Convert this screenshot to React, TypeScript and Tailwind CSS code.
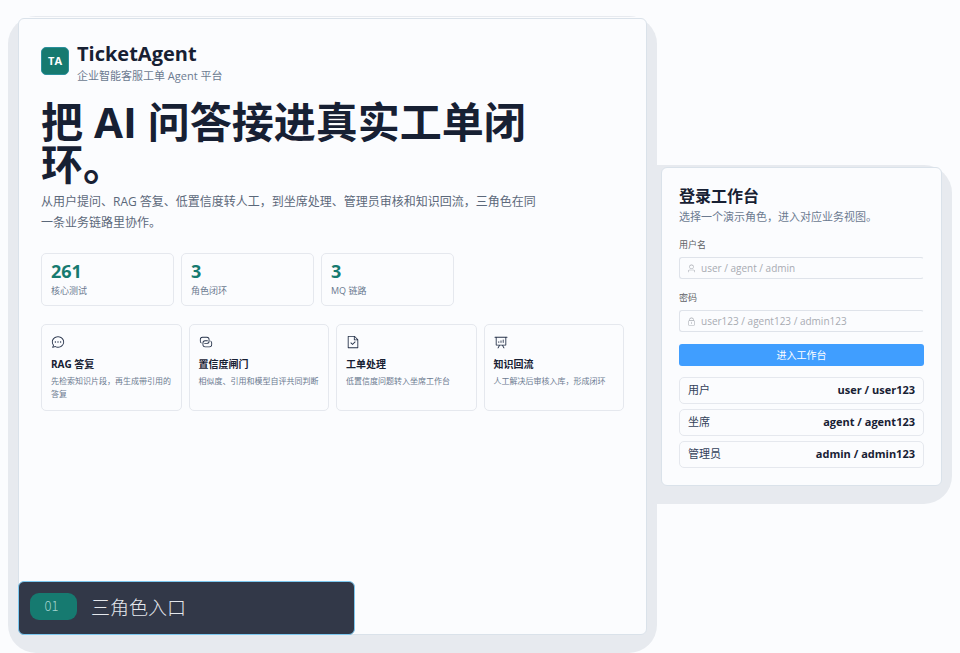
import { useState } from "react";

const icons = {
  chat: [
    "m174.72 855.68 135.296-45.12 23.68 11.84C388.096 849.536 448.576 864 512 864c211.84 0 384-166.784 384-352S723.84 160 512 160 128 326.784 128 512c0 69.12 24.96 139.264 70.848 199.232l22.08 28.8-46.272 115.584zm-45.248 82.56A32 32 0 0 1 89.6 896l58.368-145.92C94.72 680.32 64 596.864 64 512 64 299.904 256 96 512 96s448 203.904 448 416-192 416-448 416a461.056 461.056 0 0 1-206.912-48.384l-175.616 58.56z",
    "M512 563.2a51.2 51.2 0 1 1 0-102.4 51.2 51.2 0 0 1 0 102.4m192 0a51.2 51.2 0 1 1 0-102.4 51.2 51.2 0 0 1 0 102.4m-384 0a51.2 51.2 0 1 1 0-102.4 51.2 51.2 0 0 1 0 102.4",
  ],
  connection: [
    "M640 384v64H448a128 128 0 0 0-128 128v128a128 128 0 0 0 128 128h320a128 128 0 0 0 128-128V576a128 128 0 0 0-64-110.848V394.88c74.56 26.368 128 97.472 128 181.056v128a192 192 0 0 1-192 192H448a192 192 0 0 1-192-192V576a192 192 0 0 1 192-192z",
    "M384 640v-64h192a128 128 0 0 0 128-128V320a128 128 0 0 0-128-128H256a128 128 0 0 0-128 128v128a128 128 0 0 0 64 110.848v70.272A192.06 192.06 0 0 1 64 448V320a192 192 0 0 1 192-192h320a192 192 0 0 1 192 192v128a192 192 0 0 1-192 192z",
  ],
  document: [
    "M805.504 320 640 154.496V320zM832 384H576V128H192v768h640zM160 64h480l256 256v608a32 32 0 0 1-32 32H160a32 32 0 0 1-32-32V96a32 32 0 0 1 32-32m318.4 582.144 180.992-180.992L704.64 510.4 478.4 736.64 320 578.304l45.248-45.312z",
  ],
  analysis: [
    "m665.216 768 110.848 192h-73.856L591.36 768H433.024L322.176 960H248.32l110.848-192H160a32 32 0 0 1-32-32V192H64a32 32 0 0 1 0-64h896a32 32 0 1 1 0 64h-64v544a32 32 0 0 1-32 32zM832 192H192v512h640zM352 448a32 32 0 0 1 32 32v64a32 32 0 0 1-64 0v-64a32 32 0 0 1 32-32m160-64a32 32 0 0 1 32 32v128a32 32 0 0 1-64 0V416a32 32 0 0 1 32-32m160-64a32 32 0 0 1 32 32v192a32 32 0 1 1-64 0V352a32 32 0 0 1 32-32",
  ],
  user: [
    "M512 512a192 192 0 1 0 0-384 192 192 0 0 0 0 384m0 64a256 256 0 1 1 0-512 256 256 0 0 1 0 512m320 320v-96a96 96 0 0 0-96-96H288a96 96 0 0 0-96 96v96a32 32 0 1 1-64 0v-96a160 160 0 0 1 160-160h448a160 160 0 0 1 160 160v96a32 32 0 1 1-64 0",
  ],
  lock: [
    "M224 448a32 32 0 0 0-32 32v384a32 32 0 0 0 32 32h576a32 32 0 0 0 32-32V480a32 32 0 0 0-32-32zm0-64h576a96 96 0 0 1 96 96v384a96 96 0 0 1-96 96H224a96 96 0 0 1-96-96V480a96 96 0 0 1 96-96",
    "M512 544a32 32 0 0 1 32 32v192a32 32 0 1 1-64 0V576a32 32 0 0 1 32-32m192-160v-64a192 192 0 1 0-384 0v64zM512 64a256 256 0 0 1 256 256v128H256V320A256 256 0 0 1 512 64",
  ],
};

type IconName = keyof typeof icons;

const stats = [
  { value: "261", label: "核心测试" },
  { value: "3", label: "角色闭环" },
  { value: "3", label: "MQ 链路" },
];

const features: { icon: IconName; title: string; text: string }[] = [
  { icon: "chat", title: "RAG 答复", text: "先检索知识片段，再生成带引用的答复" },
  { icon: "connection", title: "置信度闸门", text: "相似度、引用和模型自评共同判断" },
  { icon: "document", title: "工单处理", text: "低置信度问题转入坐席工作台" },
  { icon: "analysis", title: "知识回流", text: "人工解决后审核入库，形成闭环" },
];

const accounts = [
  { role: "用户", username: "user", password: "user123" },
  { role: "坐席", username: "agent", password: "agent123" },
  { role: "管理员", username: "admin", password: "admin123" },
];

function Icon({ name, className }: { name: IconName; className: string }) {
  return (
    <svg viewBox="0 0 1024 1024" fill="currentColor" aria-hidden="true" className={className}>
      {icons[name].map((d) => (
        <path key={d} d={d} />
      ))}
    </svg>
  );
}

function Field({ id, label, icon, type, placeholder, value, onChange }: {
  id: string;
  label: string;
  icon: IconName;
  type: string;
  placeholder: string;
  value: string;
  onChange: (value: string) => void;
}) {
  return (
    <div className="mt-3">
      <label htmlFor={id} className="block text-[9px] leading-[14px] text-[#606266]">{label}</label>
      <div className="mt-[5px] flex h-[22px] items-center gap-[5px] rounded-[3px] border border-[#dfe3ea] border-r-transparent px-[7px]">
        <Icon name={icon} className="size-[9px] shrink-0 text-[#a8abb2]" />
        <input
          id={id}
          type={type}
          value={value}
          placeholder={placeholder}
          onChange={(e) => onChange(e.target.value)}
          className="w-full min-w-0 bg-transparent text-[10px] leading-[14px] text-[#606266] outline-none placeholder:text-[#a8abb2]"
        />
      </div>
    </div>
  );
}

export default function App() {
  const [username, setUsername] = useState("");
  const [password, setPassword] = useState("");

  return (
    <main
      lang="zh-CN"
      className="isolate grid min-h-screen grid-cols-[minmax(0,1fr)_281px] items-center gap-[14px] overflow-hidden bg-[#fbfcfe] p-[18px] font-['Open_Sans','Noto_Sans_CJK_SC',sans-serif] text-[#172033]"
    >
      {/* intro */}
      <section className="relative self-stretch rounded-md border border-[#dae2ea] bg-[#fbfcfe] p-[22px] shadow-[0_-1px_0_#fbfcfe] before:absolute before:-top-[3px] before:-right-[11px] before:-bottom-[19px] before:-left-[11px] before:-z-10 before:rounded-[28px] before:bg-[#e7eaef]">
        <div className="flex items-start gap-2">
          <div className="mt-[6px] flex size-7 items-center justify-center rounded-[5px] border border-[#2a8f9c] bg-[#167a70] text-[11px] font-bold text-white">
            TA
          </div>
          <div>
            <div className="text-[20px] leading-[26px] font-bold">TicketAgent</div>
            <div className="text-[11px] leading-[18px] text-[#6b7a90]">企业智能客服工单 Agent 平台</div>
          </div>
        </div>

        <h1 className="mt-4 max-w-[500px] text-[42px] leading-[42px] font-bold">把 AI 问答接进真实工单闭环。</h1>
        <p className="mt-[6px] max-w-[500px] text-[12px] leading-[21px] text-[#5b687a]">
          从用户提问、RAG 答复、低置信度转人工，到坐席处理、管理员审核和知识回流，三角色在同一条业务链路里协作。
        </p>

        <div className="mt-5 grid max-w-[413px] grid-cols-3 gap-[7px]">
          {stats.map((item) => (
            <div key={item.label} className="rounded-[5px] border border-[#e5e8ee] px-[9px] py-[7px]">
              <div className="text-[18px] leading-[21px] font-bold text-[#167a70]">{item.value}</div>
              <div className="mt-[2px] text-[9px] leading-[14px] text-[#6b7a90]">{item.label}</div>
            </div>
          ))}
        </div>

        <div className="mt-[18px] grid grid-cols-4 gap-[7px]">
          {features.map((item) => (
            <article key={item.title} className="rounded-[5px] border border-[#e5e8ee] px-[9px] py-[10px]">
              <Icon name={item.icon} className="size-[14px] text-[#26324a]" />
              <h2 className="mt-2 text-[10px] leading-[14px] font-bold">{item.title}</h2>
              <p className="mt-[3px] text-[8px] leading-[13px] text-[#6b7a90]">{item.text}</p>
            </article>
          ))}
        </div>

        {/* step caption */}
        <div className="absolute -bottom-px -left-px flex h-[54px] w-[337px] items-center gap-[14px] rounded-[6px] border border-[#7cc8f0] bg-[#323848] px-[11px] pb-[3px] font-['Noto_Sans_CJK_SC',sans-serif] font-light text-[#e4e7ec]">
          <span className="flex h-[27px] w-[47px] items-center justify-center rounded-[9px] bg-[#167a70] pr-1 pb-[2px] text-[13px] text-[#a5d3ce]">01</span>
          <span className="text-[19px] leading-[26px]">三角色入口</span>
        </div>
      </section>

      {/* login */}
      <section className="relative rounded-md border border-[#dae2ea] bg-[#fbfcfe] px-[17px] pt-[18px] pb-[17px] before:absolute before:-top-[3px] before:-right-[11px] before:-bottom-[19px] before:-left-[11px] before:-z-10 before:rounded-l-[3px] before:rounded-r-[28px] before:bg-[#e7eaef]">
        <h2 className="text-[16px] leading-5 font-bold">登录工作台</h2>
        <p className="mt-[2px] text-[11px] leading-[18px] text-[#6b7a90]">选择一个演示角色，进入对应业务视图。</p>

        <form onSubmit={(e) => e.preventDefault()}>
          <Field id="username" label="用户名" icon="user" type="text" placeholder="user / agent / admin" value={username} onChange={setUsername} />
          <Field id="password" label="密码" icon="lock" type="password" placeholder="user123 / agent123 / admin123" value={password} onChange={setPassword} />
          <button type="submit" className="mt-3 h-[22px] w-full rounded-[3px] bg-[#409eff] text-[10px] text-white">
            进入工作台
          </button>
        </form>

        <div className="mt-[11px] grid gap-[5px]">
          {accounts.map((item) => (
            <button
              key={item.username}
              type="button"
              onClick={() => {
                setUsername(item.username);
                setPassword(item.password);
              }}
              className="flex h-[27px] w-full items-center justify-between rounded-[5px] border border-[#e5e8ee] px-2 text-[11px]"
            >
              <span className="text-[#33415a]">{item.role}</span>
              <strong>{item.username} / {item.password}</strong>
            </button>
          ))}
        </div>
      </section>
    </main>
  );
}
